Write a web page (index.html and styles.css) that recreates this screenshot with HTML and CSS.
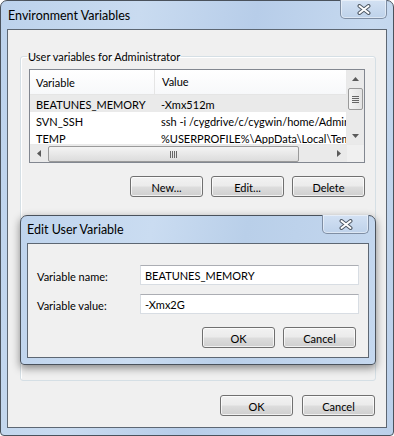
FILE: index.html
```html
<!DOCTYPE html>
<html lang="en">
<head>
  <meta charset="UTF-8" />
  <title>Environment Variables</title>
  <link rel="stylesheet" href="styles.css">
</head>
<body>
  <div class="window">
    <div class="titlebar">
      <span class="title">Environment Variables</span>
      <div class="close">
        <svg width="14" height="11" viewBox="0 0 14 11"><path d="M2.5 2 L11.5 9 M11.5 2 L2.5 9" stroke="#4f5965" stroke-width="4" stroke-linecap="round"/><path d="M2.5 2 L11.5 9 M11.5 2 L2.5 9" stroke="#fff" stroke-width="2" stroke-linecap="round"/></svg>
      </div>
    </div>

    <div class="client">
      <fieldset class="group">
        <legend>User variables for Administrator</legend>
        <div class="listview">
          <div class="list-top">
            <div class="rows">
              <div class="row head"><span class="c1">Variable</span><span class="c2">Value</span></div>
              <div class="row sel"><span class="c1">BEATUNES_MEMORY</span><span class="c2">-Xmx512m</span></div>
              <div class="row"><span class="c1">SVN_SSH</span><span class="c2">ssh -i /cygdrive/c/cygwin/home/Administrator/.ssh</span></div>
              <div class="row"><span class="c1">TEMP</span><span class="c2">%USERPROFILE%\AppData\Local\Temp</span></div>
            </div>
            <div class="vscroll">
              <span class="arrow"><svg width="7" height="4" viewBox="0 0 7 4"><path d="M0 4 L3.5 0 L7 4 Z" fill="#5a5a5a"/></svg></span>
              <div class="vtrack"><div class="vthumb"><span class="grip-h"></span></div></div>
              <span class="arrow"><svg width="7" height="4" viewBox="0 0 7 4"><path d="M0 0 L3.5 4 L7 0 Z" fill="#5a5a5a"/></svg></span>
            </div>
          </div>
          <div class="hscroll">
            <span class="arrow"><svg width="4" height="7" viewBox="0 0 4 7"><path d="M4 0 L0 3.5 L4 7 Z" fill="#5a5a5a"/></svg></span>
            <div class="htrack"><div class="hthumb"><span class="grip-v"></span></div></div>
            <span class="arrow"><svg width="4" height="7" viewBox="0 0 4 7"><path d="M0 0 L4 3.5 L0 7 Z" fill="#5a5a5a"/></svg></span>
            <span class="corner"></span>
          </div>
        </div>
        <div class="btn-row">
          <button class="btn">New...</button>
          <button class="btn">Edit...</button>
          <button class="btn">Delete</button>
        </div>
      </fieldset>

      <div class="btn-row bottom">
        <button class="btn">OK</button>
        <button class="btn">Cancel</button>
      </div>
    </div>

    <div class="dialog">
      <div class="titlebar small">
        <span class="title">Edit User Variable</span>
        <div class="close">
          <svg width="14" height="11" viewBox="0 0 14 11"><path d="M2.5 2 L11.5 9 M11.5 2 L2.5 9" stroke="#4f5965" stroke-width="4" stroke-linecap="round"/><path d="M2.5 2 L11.5 9 M11.5 2 L2.5 9" stroke="#fff" stroke-width="2" stroke-linecap="round"/></svg>
        </div>
      </div>
      <div class="client dlg-client">
        <div class="field">
          <label>Variable name:</label>
          <div class="textbox">BEATUNES_MEMORY</div>
        </div>
        <div class="field">
          <label>Variable value:</label>
          <div class="textbox">-Xmx2G</div>
        </div>
        <div class="btn-row dlg-btns">
          <button class="btn">OK</button>
          <button class="btn">Cancel</button>
        </div>
      </div>
    </div>
  </div>
</body>
</html>
```

FILE: styles.css
```css
body {
  margin: 0;
  font-family: Lato, "Liberation Sans", Arial, sans-serif;
  font-size: 11px;
  color: #000;
  background: #fff;
}

.window {
  position: relative;
  width: 394px;
  height: 436px;
  box-sizing: border-box;
  border: 1px solid #4a525c;
  border-radius: 7px 7px 4px 4px;
  padding: 0 6px 7px;
  background: linear-gradient(100deg, #bcd2ec 0%, #c9dbf0 30%, #b7cde9 55%, #c6d9ef 80%, #bbd0ea 100%);
  display: flex;
  flex-direction: column;
}

.titlebar {
  height: 28px;
  display: flex;
  justify-content: space-between;
  align-items: flex-start;
  flex-shrink: 0;
}

.title {
  margin-left: 1px;
  margin-top: 7px;
  font-size: 12.5px;
}

.close {
  width: 47px;
  height: 19px;
  margin-top: -1px;
  box-sizing: border-box;
  border: 1px solid #7f8ea3;
  border-top: none;
  border-radius: 0 0 5px 5px;
  background: linear-gradient(#d3e1f3, #bed2ea);
  box-shadow: inset 0 0 0 1px rgba(255, 255, 255, 0.45);
  display: flex;
  align-items: center;
  justify-content: center;
}

.client {
  flex: 1;
  min-height: 0;
  background: #f0f0f0;
  border: 1px solid #5d6773;
  display: flex;
  flex-direction: column;
}

.group {
  margin: 20px 10px 0 12px;
  padding: 6px 10px 0 8px;
  height: 323px;
  min-width: 0;
  border: 1px solid #d5dfe5;
  border-radius: 3px;
  box-shadow: inset 1px 1px 0 #fff;
}

.group legend {
  padding: 0 1px;
  margin-left: -2px;
}

.listview {
  height: 94px;
  box-sizing: border-box;
  border: 1px solid #828790;
  background: #fff;
  display: flex;
  flex-direction: column;
}

.list-top {
  flex: 1;
  min-height: 0;
  display: flex;
  overflow: hidden;
}

.rows {
  flex: 1;
  min-width: 0;
  overflow: hidden;
}

.row {
  display: flex;
  height: 17px;
  box-sizing: border-box;
  padding-top: 2px;
  align-items: center;
  white-space: nowrap;
}

.row.head {
  height: 25px;
  padding-top: 0;
  border-bottom: 1px solid #e5e5e5;
  background: linear-gradient(#fff, #f7f8fa);
}

.row.sel {
  background: #eaeaea;
}

.c1 {
  width: 118px;
  flex-shrink: 0;
  padding-left: 6px;
}

.c2 {
  padding-left: 7px;
  overflow: hidden;
}

.row.head .c1 {
  height: 24px;
  line-height: 26px;
  border-right: 1px solid #e5e5e5;
}

.row.head .c2 {
  line-height: 26px;
}

.vscroll {
  width: 17px;
  flex-shrink: 0;
  background: #eaeaea;
  border-left: 1px solid #e9e9e9;
  display: flex;
  flex-direction: column;
  align-items: center;
}

.arrow {
  height: 17px;
  width: 17px;
  display: flex;
  align-items: center;
  justify-content: center;
  flex-shrink: 0;
}

.vtrack {
  flex: 1;
  width: 100%;
  padding-top: 1px;
}

.vthumb {
  margin: 0 1px;
  height: 20px;
  border: 1px solid #9a9a9a;
  border-radius: 2px;
  background: linear-gradient(90deg, #f4f4f4, #e3e3e3);
  display: flex;
  align-items: center;
  justify-content: center;
}

.grip-h {
  width: 7px;
  height: 7px;
  background: repeating-linear-gradient(#666 0 1px, transparent 1px 2px);
}

.hscroll {
  height: 17px;
  flex-shrink: 0;
  display: flex;
  background: #eaeaea;
  border-top: 1px solid #e9e9e9;
}

.htrack {
  flex: 1;
  padding: 1px 31px 0 1px;
}

.hthumb {
  height: 14px;
  border: 1px solid #9a9a9a;
  border-radius: 2px;
  background: linear-gradient(#f4f4f4, #dcdcdc);
  display: flex;
  align-items: center;
  justify-content: center;
}

.grip-v {
  width: 7px;
  height: 7px;
  background: repeating-linear-gradient(90deg, #666 0 1px, transparent 1px 2px);
}

.corner {
  width: 17px;
  flex-shrink: 0;
  background: #f0f0f0;
}

.btn-row {
  display: flex;
  justify-content: flex-end;
  gap: 8px;
  margin-top: 13px;
}

.btn {
  width: 73px;
  height: 21px;
  padding: 1px 0 0;
  font-family: inherit;
  font-size: 11px;
  color: #000;
  border: 1px solid #707070;
  border-radius: 3px;
  background: linear-gradient(#f2f2f2 0%, #ebebeb 48%, #dddddd 52%, #cfcfcf 100%);
  box-shadow: inset 0 0 0 1px rgba(255, 255, 255, 0.7);
}

.btn-row.bottom {
  margin: 14px 11px 0 0;
  gap: 9px;
}

.dialog {
  position: absolute;
  left: 19px;
  top: 214px;
  width: 356px;
  height: 150px;
  box-sizing: border-box;
  border: 1px solid #4a525c;
  border-radius: 7px 7px 4px 4px;
  padding: 0 6px 6px;
  background: linear-gradient(100deg, #bfd4ed 0%, #cadcf1 35%, #b9cfe9 60%, #c5d8ef 100%);
  box-shadow: 0 3px 9px rgba(0, 0, 0, 0.45);
  display: flex;
  flex-direction: column;
}

.titlebar.small {
  height: 27px;
}

.titlebar.small .title {
  margin-left: 0;
  margin-top: 6px;
}

.dlg-client {
  padding: 21px 9px 0 9px;
  gap: 9px;
}

.field {
  display: flex;
  align-items: center;
}

.field label {
  width: 103px;
  flex-shrink: 0;
  padding-top: 2px;
}

.textbox {
  flex: 1;
  height: 20px;
  box-sizing: border-box;
  border: 1px solid #d8dde3;
  border-top-color: #abadb3;
  background: #fff;
  padding-left: 4px;
  line-height: 20px;
}

.btn-row.dlg-btns {
  margin: 4px 3px 0 0;
}
```
